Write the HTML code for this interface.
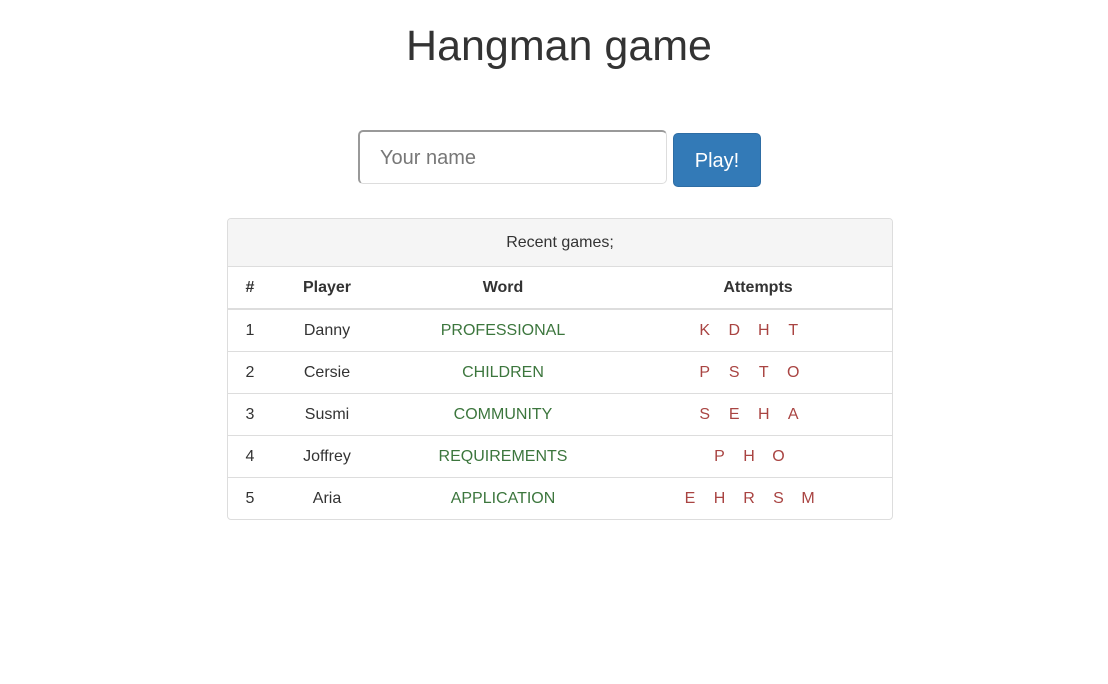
<!DOCTYPE html>
<html><head><meta charset="utf-8"><style>
body{margin:0;background:#fff;font-family:"Liberation Sans",Arial,sans-serif;color:#333;font-size:16px;}
h1{position:absolute;left:0;width:1118px;top:21px;margin:0;text-align:center;font-weight:normal;font-size:43px;line-height:50px;}
.inp{position:absolute;left:358px;top:130px;width:306px;height:51px;border:1px solid #ddd;border-top:2px solid #999;border-left:2px solid #999;border-radius:5px;box-sizing:content-box;}
.inp span{position:absolute;left:20px;top:15px;font-size:20px;color:#777;}
.btn{position:absolute;left:673px;top:133px;width:88px;height:54px;background:#337ab7;border:1px solid #2e6da4;box-sizing:border-box;border-radius:5px;color:#fff;font-size:20px;text-align:center;line-height:54px;}
.panel{position:absolute;left:227px;top:218px;width:666px;height:302px;border:1px solid #ddd;border-radius:4px;box-sizing:border-box;overflow:hidden;}
.ph{height:48px;background:#f5f5f5;border-bottom:1px solid #ddd;text-align:center;line-height:48px;box-sizing:border-box;}
table{border-collapse:collapse;width:664px;table-layout:fixed;}
td,th{text-align:center;padding:0;height:41px;}
th{font-weight:bold;border-bottom:2px solid #ddd;height:41px;}
tr.r td{border-top:1px solid #ddd;}
.w{color:#3c763d;}
.a{padding-right:18px;}
.a span{display:inline-block;width:29.5px;color:#a94442;}
</style></head><body>
<h1>Hangman game</h1>
<div class="inp"><span>Your name</span></div>
<div class="btn">Play!</div>
<div class="panel">
<div class="ph">Recent games;</div>
<table>
<colgroup><col style="width:44px"><col style="width:110px"><col style="width:242px"><col style="width:268px"></colgroup>
<tr><th>#</th><th>Player</th><th>Word</th><th>Attempts</th></tr>
<tr><td>1</td><td>Danny</td><td class="w">PROFESSIONAL</td><td class="a"><span>K</span><span>D</span><span>H</span><span>T</span></td></tr>
<tr class="r"><td>2</td><td>Cersie</td><td class="w">CHILDREN</td><td class="a"><span>P</span><span>S</span><span>T</span><span>O</span></td></tr>
<tr class="r"><td>3</td><td>Susmi</td><td class="w">COMMUNITY</td><td class="a"><span>S</span><span>E</span><span>H</span><span>A</span></td></tr>
<tr class="r"><td>4</td><td>Joffrey</td><td class="w">REQUIREMENTS</td><td class="a"><span>P</span><span>H</span><span>O</span></td></tr>
<tr class="r"><td>5</td><td>Aria</td><td class="w">APPLICATION</td><td class="a"><span>E</span><span>H</span><span>R</span><span>S</span><span>M</span></td></tr>
</table>
</div>
</body></html>
